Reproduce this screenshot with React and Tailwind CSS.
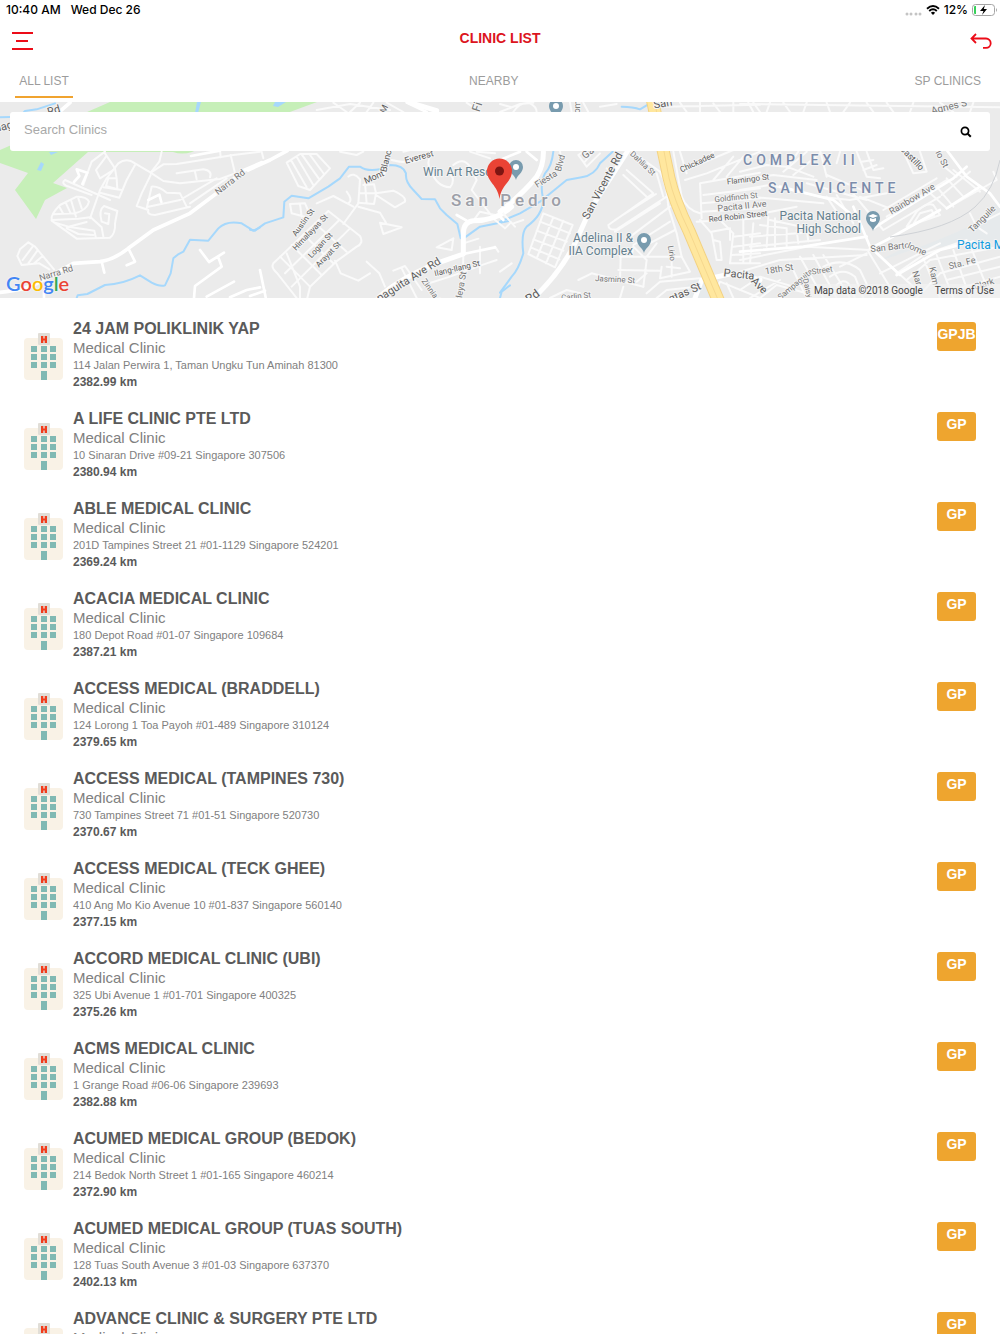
import React from "react";

const clinics = [
  ["24 JAM POLIKLINIK YAP", "114 Jalan Perwira 1, Taman Ungku Tun Aminah 81300", "2382.99 km", "GPJB"],
  ["A LIFE CLINIC PTE LTD", "10 Sinaran Drive #09-21 Singapore 307506", "2380.94 km", "GP"],
  ["ABLE MEDICAL CLINIC", "201D Tampines Street 21 #01-1129 Singapore 524201", "2369.24 km", "GP"],
  ["ACACIA MEDICAL CLINIC", "180 Depot Road #01-07 Singapore 109684", "2387.21 km", "GP"],
  ["ACCESS MEDICAL (BRADDELL)", "124 Lorong 1 Toa Payoh #01-489 Singapore 310124", "2379.65 km", "GP"],
  ["ACCESS MEDICAL (TAMPINES 730)", "730 Tampines Street 71 #01-51 Singapore 520730", "2370.67 km", "GP"],
  ["ACCESS MEDICAL (TECK GHEE)", "410 Ang Mo Kio Avenue 10 #01-837 Singapore 560140", "2377.15 km", "GP"],
  ["ACCORD MEDICAL CLINIC (UBI)", "325 Ubi Avenue 1 #01-701 Singapore 400325", "2375.26 km", "GP"],
  ["ACMS MEDICAL CLINIC", "1 Grange Road #06-06 Singapore 239693", "2382.88 km", "GP"],
  ["ACUMED MEDICAL GROUP (BEDOK)", "214 Bedok North Street 1 #01-165 Singapore 460214", "2372.90 km", "GP"],
  ["ACUMED MEDICAL GROUP (TUAS SOUTH)", "128 Tuas South Avenue 3 #01-03 Singapore 637370", "2402.13 km", "GP"],
  ["ADVANCE CLINIC & SURGERY PTE LTD", "", "", "GP"],
];

// Each tile is drawn in units of a third of a pixel, starting at its own x.
const tiles = [
  {
    x: 0,
    water: [
      "M0,52 L60,50 L75,33 L110,28 L165,10",
      "M230,594 L233,586 L262,582 L315,555 Q370,552 420,526 L455,548 Q480,561 495,556 L512,520 L520,475 L533,464 L550,455 L570,419 L625,422 L655,385 Q680,360 725,370 L760,392 L780,382",
    ],
    minor: [
      "M315,155 L275,185 L262,220 L250,255 M315,160 L345,205 L350,235 L325,235 L318,258 L352,268 L350,235",
      "M340,210 L300,235 L288,210 L318,170",
      "M330,300 L195,240 Q183,248 198,257 L275,285",
      "M270,355 L300,270 L320,235 L355,190 Q380,172 405,190 L452,218 L478,185 L485,155",
      "M405,195 L380,240 L358,293 L300,278 M310,262 L365,270",
      "M452,218 L490,193 L530,192 L700,165 L780,155",
      "M452,218 L490,243 L540,250 L660,237 L705,220 M530,220 L610,208 Q638,212 630,232 M585,215 L590,238 M705,220 L692,165 M660,150 L662,172",
      "M452,225 L425,280 L410,318 L445,330 Q440,345 465,345 L570,320 M455,260 L440,325 M455,260 Q475,258 500,278 L540,280 L560,320 M445,320 L540,300 L650,235 M570,310 L680,235",
      "M270,352 L235,356 L155,360 Q150,345 180,315 L230,290 Q262,290 267,305 Q262,330 225,340 L162,343 M178,320 L190,342 M197,308 L212,340 M213,300 L228,350 M235,295 L245,325",
      "M155,362 L230,416 L330,413 Q347,400 345,370 L352,333 L312,318 Q295,330 305,365 L325,372 L328,342 L315,340 M272,352 L305,382 L310,410 M165,368 L205,380 L283,392 L287,410 M200,385 L235,402 L280,405 M200,382 L260,366",
      "M60,448 L85,427 L105,440 L162,508 M60,448 L52,468 L65,495 L118,490 L148,508 M68,480 L98,440 M85,490 L112,452 M100,492 L128,468",
    ],
    major: [
      "M230,208 L262,218 L247,252 M230,208 L238,228 L222,246 M445,300 L478,284 L484,306",
      "M305,485 L313,518 M385,445 L405,485 L380,496 M600,450 L627,486 L672,458 M655,472 L665,500 L585,558 L582,594 M620,590 L702,545 M690,592 L740,570 L780,562 M132,575 L132,594 M573,168 L660,152",
    ],
    wide: ["M0,577 Q80,570 120,545 L220,490 L300,485 Q340,480 385,445 L460,390 L570,340 L650,280 L730,212 L785,188", "M150,60 L210,8"],
  },
  {
    x: 250,
    water: [
      "M0,389 L15,392 L45,370 L100,352 L103,305 L125,287 L175,295 L235,260 L270,235 L297,200 L330,200 Q350,215 390,208 L420,195 Q460,195 468,220 Q465,245 490,270 L515,297 L555,298 L570,325 L590,345 L622,372 L632,415",
      "M645,412 L690,380 L780,362 M750,594 L755,575 L780,556",
    ],
    minor: [
      "M35,155 L40,175 M110,188 L150,162 L200,162 L240,205 L180,270 L145,258 Z M123,180 L170,262 M140,170 L190,255 M155,163 L208,238 M178,162 L222,222",
      "M120,312 L165,310 L180,345 M120,312 L125,340 L170,352 M150,312 L155,350",
      "M295,230 Q310,215 330,238 L325,310 L280,372 M200,310 L250,288 L310,320 M290,275 Q310,300 295,310",
      "M340,255 L372,253 L378,280 L372,312 L325,308 M330,280 L378,280 L430,272 Q470,290 465,305 L435,322 L378,285 M325,320 L390,338 L408,368 M390,368 L455,382 L400,402 Z M345,250 L350,310",
      "M235,333 L330,408 Q342,430 320,440 L258,485 L180,560 L172,594 M235,333 L70,490 Q62,503 80,518 L140,594 M268,360 L105,520 M300,385 L125,560",
      "M90,470 L180,560 M125,435 L215,525 M160,403 L250,490 M195,370 L290,455 M110,460 L150,560 L150,594",
      "M255,482 L272,520 L325,542 L360,520 M350,485 L388,520 L405,560",
      "M425,180 Q480,195 520,175 M460,155 L480,150 M545,160 Q525,190 545,215 Q560,260 600,262 Q618,240 600,222",
      "M610,195 Q640,170 660,200 L680,240 L665,270 L735,360 L765,385 L780,370 M735,345 L690,335 L675,355",
      "M560,442 L610,415 L605,450 Z M640,430 L685,416 M430,512 L465,498 L515,570 M455,505 L500,594 M530,552 L600,530 L710,490 L740,480 M690,440 L690,520 M640,465 Q640,540 625,594 M735,440 L745,455",
      "M270,155 L320,165 L340,155 M660,155 L720,175 M680,155 L735,160",
      "M200,30 L300,12 L420,30 M250,8 L290,36 M330,8 L300,36 M370,8 L350,36 M410,8 L460,36 M650,8 L690,36",
    ],
    major: ["M30,510 L47,592 M0,588 L45,572 M420,155 L400,228 M620,345 L650,362 M470,8 L530,36 M640,462 L735,442"],
    wide: ["M-6,210 L60,180 L112,152"],
    trunk: ["M385,594 Q440,540 560,490 L640,462 L640,400 Q640,365 670,362 Q740,362 785,320", "M480,8 L560,32"],
  },
  {
    x: 500,
    water: [
      "M160,155 Q155,200 135,220 Q120,250 128,290 Q135,340 80,380 Q62,400 70,460 Q55,510 35,530 L0,578",
      "M0,365 L60,340 L120,305 L200,240 L245,232 Q285,225 300,190 L338,155",
      "M365,20 Q400,20 420,28 L450,10",
    ],
    minor: [
      "M130,340 L218,375 L165,502 L85,462 Z M120,365 L210,400 M110,392 L200,425 M100,418 L190,452 M92,442 L178,478 M160,352 L110,475 M190,362 L138,490",
      "M0,330 L45,380 M40,370 L70,360 M180,155 L185,185 M235,165 L260,200 L300,160 M235,165 L250,155 M280,155 L255,185 M320,205 L340,225",
      "M325,375 Q325,392 350,388 L500,290 M325,375 L460,280 L380,210 M345,360 L468,282 M370,225 L440,290 M345,395 L480,310 M380,418 L510,320 M400,435 L510,365 M430,440 L525,390",
      "M395,155 L480,215 Q500,250 505,320 L530,400 L545,470 M470,220 L490,290",
      "M360,470 L540,470 M355,510 L480,512 M362,470 L360,540 M395,470 L400,440 L440,480 L430,560 M440,470 L470,430 M485,500 L480,535 L570,515 L545,470 M500,500 L540,505 M515,470 L515,530",
      "M235,540 L275,520 L430,560 M410,545 L440,520 M360,594 L370,560 M0,515 L35,490 M150,594 L200,570 L240,580 M470,594 L500,570 L590,560 M440,580 L480,545 L600,535",
      "M520,155 L545,290 Q560,330 600,340 M540,155 L560,220 M545,215 L700,150 M555,240 L620,220 L780,155 M600,250 L780,218 M600,250 L605,355 M610,285 L780,265 M605,310 L780,295 M605,335 L780,325 M590,365 L780,355 M620,180 L640,155 M640,240 L700,170 M680,230 L730,170",
      "M600,360 L635,400 L650,480 L665,480 L660,425 L640,420 M635,395 L690,385 L690,420 M660,360 L700,400 L690,490 L780,490 M700,410 L780,400 M700,440 L780,430 M695,465 L780,460 M730,360 L730,490 M760,370 L750,490",
      "M640,594 L660,545 L780,594 M680,550 L700,594",
      "M0,36 L60,12 L100,8 M40,36 Q60,5 90,10 Q110,20 110,36 M0,12 L35,22 M210,8 L215,36 M250,8 L265,36 M300,20 L350,12 M490,20 L780,14 M540,8 L560,36 M600,8 L600,36 M640,10 L660,36 M700,8 L700,36 M745,8 L760,36",
    ],
    major: ["M80,155 L110,180 M0,180 L60,155 M0,350 L10,360"],
    trunk: ["M0,335 Q70,280 110,230 Q132,195 130,150", "M385,150 L270,330 L225,430 Q180,520 95,600", "M585,594 L605,540 L700,520 L780,540"],
  },
  {
    x: 740,
    water: [],
    minor: [
      "M0,215 L80,195 L140,200 L220,230 M0,240 L100,225 L230,240 M0,270 L90,255 L240,290 M30,290 L250,310 M90,180 L120,160 M150,190 L175,155 M130,215 L200,155 M160,225 L240,160",
      "M70,340 L170,320 M90,360 L230,390 M60,375 L140,385 L140,440 M85,350 L80,440 M105,355 L105,440 M30,410 L240,395 M30,440 L240,420 M170,390 L175,430 M200,385 L205,425",
      "M240,150 L260,230 M300,155 L290,190 M350,155 L380,230 L420,235 M380,155 L400,210 L430,205 M365,185 L400,180 M370,210 L410,195 M260,225 L390,280 M200,250 L380,300",
      "M240,290 L330,300 L440,280 M260,290 L300,350 M290,285 L340,370 M330,270 L430,390 M360,290 L460,330 M430,390 L600,290 M440,350 L620,240 M430,330 L590,235",
      "M500,380 L530,335 Q560,305 580,315 L600,345 Z M520,372 L540,340 L575,330 L582,345 Z",
      "M490,155 L520,220 L560,215 L540,155 M510,160 L535,205",
      "M590,260 L640,320 M620,235 L670,290 M605,285 L690,215 M620,325 L770,240 L760,215 M640,210 L720,275 M560,270 L620,325 M600,190 L650,230",
      "M0,480 L200,440 L390,450 M0,515 L120,480 L380,465 M150,490 L200,594 M180,470 L250,594 M220,465 L290,594 M250,465 L330,594 M0,570 L60,530 L160,560 M30,594 L120,540",
      "M250,500 Q310,470 360,510 L400,594 M270,530 Q310,500 345,530 L370,594 M290,555 Q310,535 325,550 L345,594 M300,500 L380,460",
      "M385,455 L470,594 M410,460 L520,560 M470,520 L550,465 L680,420 M420,520 L600,430 M500,540 L570,480 L780,440 M530,594 L600,520 L780,470 M550,475 L600,594 M590,465 L640,594 M640,450 L690,594 M690,435 L740,560 M620,540 L780,500 M640,570 L780,530",
      "M690,340 L710,380 L740,400 M720,370 L780,340 M60,594 L110,555 L200,580",
      "M0,12 L780,22 M40,8 L60,36 M90,8 L80,36 M130,8 L150,36 M200,8 L190,36 M260,8 L270,36 M330,8 L310,36 M380,8 L400,36 M440,8 L460,36 M520,8 L510,36 M600,8 L640,36 M700,8 L690,36",
    ],
    major: [
      "M620,150 L680,230 L750,280 L780,320 M340,320 L390,440 L480,525 M390,445 L440,420 L600,330 M120,260 L280,300 L330,340",
      "M400,385 L470,340 L640,235 L680,200",
      "M620,325 L720,260",
      "M0,455 L190,440 L380,410 M470,525 L600,450 L700,425",
    ],
    wide: [],
  },
];

const street = "fill-[#777777]";
const dark = "fill-[#5b5b5b]";
const place = "fill-[#64808e]";

// text, centre x, centre y, rotation, size, colour
const labels = [
  ["Narra Rd", 230, 182, -38, 9, street],
  ["Narra Rd", 56, 273, -17, 9, street],
  ["nag", 4, 127, -14, 11, dark],
  ["Rd", 54, 111, -16, 11, dark],
  ["Mont", 374, 177, -24, 9, dark],
  ["Blanc", 386, 161, -76, 9, dark],
  ["Everest", 419, 157, -15, 9, dark],
  ["M", 384, 109, -65, 9, dark],
  ["Austin St", 303, 222, -54, 8, dark],
  ["Himalayas St", 310, 232, -46, 8, dark],
  ["Logan St", 320, 245, -47, 8, dark],
  ["Arayat St", 328, 254, -46, 8, dark],
  ["paguita Ave Rd", 409, 280, -32, 11, dark],
  ["Ilang-Ilang St", 457, 268, -13, 8, dark],
  ["Zinnia S", 432, 291, 55, 8, street],
  ["tleya St", 461, 286, -80, 9, street],
  ["Fi", 478, 107, -72, 12, street],
  ["om", 577, 107, -88, 9, street],
  ["Fiesta", 546, 179, -32, 9, street],
  ["Blvd", 560, 163, -75, 9, street],
  ["San Vicente Rd", 603, 186, -62, 11, dark],
  ["Ga", 588, 153, -38, 10, street],
  ["Dahlia St", 643, 163, 43, 8, street],
  ["Lirio", 672, 253, 80, 8, street],
  ["Jasmine St", 615, 279, 3, 8, street],
  ["Carlin St", 576, 296, -6, 8, street],
  ["Rd", 533, 297, -35, 12, dark],
  ["gtas St", 685, 293, -24, 11, dark],
  ["San", 663, 104, -10, 11, dark],
  ["Chickadee", 697, 162, -25, 8, dark],
  ["Flamingo St", 748, 179, -7, 8, dark],
  ["Goldfinch St", 736, 197, -6, 8, street],
  ["Pacita II Ave", 742, 206, -6, 9, street],
  ["Red Robin Street", 738, 216, -6, 8, dark],
  ["Pacita", 739, 275, 6, 11, dark],
  ["Ave", 759, 286, 45, 11, dark],
  ["18th St", 779, 269, -9, 9, street],
  ["Sampaguita", 795, 284, -40, 8, street],
  ["Street", 822, 270, -8, 8, street],
  ["Daisy", 808, 288, 75, 8, street],
  ["Castillo", 912, 158, 46, 9, dark],
  ["lo St", 942, 159, 62, 9, street],
  ["Agnes S", 949, 107, -14, 10, street],
  ["Rainbow Ave", 912, 199, -31, 9, street],
  ["San Barto", 890, 247, -6, 9, street],
  ["lome", 917, 249, 24, 9, street],
  ["Tanguile", 982, 219, -45, 9, street],
  ["Sta. Fe", 962, 263, -14, 9, street],
  ["Nar", 917, 278, 72, 9, street],
  ["Kam", 934, 276, 78, 9, street],
  ["Clark", 984, 284, -18, 9, street],
];

function PoiPin({ x, y, children }) {
  return (
    <g transform={`translate(${x} ${y})`}>
      <path d="M0 12 C-1 7 -7 5 -7 -1 A7 7 0 1 1 7 -1 C7 5 1 7 0 12Z" fill="#789bae" />
      {children || <circle cy="-1" r="3" fill="#fff" />}
    </g>
  );
}

function MapArt() {
  return (
    <svg viewBox="0 102 1000 196" preserveAspectRatio="xMidYMid slice" className="block h-full w-full bg-[#ebebeb] font-['Roboto',sans-serif]" role="img" aria-label="Map of San Pedro">
      <path d="M110 102 L0 150 L0 163 L28 173 L15 190 L36 219 L45 200 L67 188 L53 183 L88 152 L173 152 Q182 155 192 152 L233 133 L317 102Z" fill="#c6efb8" />
      <g fill="#a6d8fc">
        <path d="M37 170 L41 162 L44 164 L41 171Z M49 152 L58 152 L51 155Z M197 102 H201 L198 113 H195Z M275 102 H286 L278 107 L273 106Z" />
      </g>
      <path d="M876 262 Q930 245 970 226 L1000 200 L1000 240 L950 246 L900 250Z M670 298 L700 276 L720 298Z" fill="#e6eaec" />
      {tiles.map((t) => (
        <g key={t.x} transform={`translate(${t.x} 100) scale(${1 / 3})`} fill="none" strokeLinecap="round" strokeLinejoin="round">
          {t.water.map((d) => <path key={d} d={d} stroke="#a6d8fc" strokeWidth="6" />)}
          {t.minor.map((d) => <path key={d} d={d} stroke="#fafafa" strokeWidth="6" />)}
          {t.major.map((d) => <path key={d} d={d} stroke="#fff" strokeWidth="8" />)}
          {(t.wide || []).map((d) => <path key={d} d={d} stroke="#fff" strokeWidth="11" />)}
          {(t.trunk || []).map((d) => <path key={d} d={d} stroke="#fff" strokeWidth="15" />)}
        </g>
      ))}
      <g fill="none">
        <path d="M890 237 Q950 229 975 207 Q994 190 1000 160" stroke="#cfd2d6" strokeWidth="1" />
        <path d="M652 98 L669 178 Q674 200 689 231 L719 302" stroke="#f3d283" strokeWidth="13" />
        <path d="M652 98 L669 178 Q674 200 689 231 L719 302" stroke="#ffe79e" strokeWidth="11" />
        <path d="M654 98 L669 178 Q674 200 689 231 L719 302" stroke="#f6d88e" strokeWidth="1" />
      </g>
      <g textAnchor="middle" stroke="#f4f4f4" strokeWidth="2" strokeLinejoin="round" style={{ paintOrder: "stroke" }}>
        {labels.map(([text, x, y, r, size, color]) => (
          <text key={text + x} transform={`translate(${x} ${y}) rotate(${r})`} y="3" fontSize={size} className={color}>{text}</text>
        ))}
        <g fontSize="12" className={place}>
          <text x="423" y="176" textAnchor="start">Win Art Reso</text>
          <text x="633" y="242" textAnchor="end">Adelina II &amp;</text>
          <text x="633" y="255" textAnchor="end">IIA Complex</text>
          <text x="861" y="220" textAnchor="end">Pacita National</text>
          <text x="861" y="233" textAnchor="end">High School</text>
        </g>
        <text x="957" y="249" textAnchor="start" fontSize="12" className="fill-[#129be0]">Pacita M</text>
        <text x="451" y="206" textAnchor="start" fontSize="17" className="fill-[#9c9fa8] font-medium tracking-[4px]">San Pedro</text>
        <g fontSize="14" textAnchor="start" className="fill-[#7b8cab] font-medium tracking-[4px]">
          <text x="743" y="165">COMPLEX II</text>
          <text x="768" y="193">SAN VICENTE</text>
        </g>
      </g>
      <PoiPin x={516} y={168} />
      <PoiPin x={556} y={107} />
      <PoiPin x={644} y={241} />
      <PoiPin x={873} y={219}>
        <path d="M-5 -3 L0 -5 L5 -3 L0 -1Z M-3 -1 L0 0 L3 -1 V2 Q0 4 -3 2Z" fill="#fff" />
      </PoiPin>
      <path d="M499.500 199 C498 185 487 182 487 171 A12.500 12.500 0 0 1 512 171 C512 182 501 185 499.500 199Z" fill="#ea4335" />
      <circle cx="499.500" cy="171" r="4.500" fill="#7d1512" />
    </svg>
  );
}

function ClinicIcon() {
  return (
    <svg viewBox="0 0 39 48" className="mt-[14px] h-12 w-[39px] shrink-0" aria-hidden="true">
      <rect y="5" width="39" height="42" rx="4" fill="#f9f2e6" />
      <rect x="14" width="12" height="12" rx="1" fill="#e1ded7" />
      <path d="M17 3 H19.300 V5.400 H20.700 V3 H23 V10 H20.700 V7.400 H19.300 V10 H17Z" fill="#f23c1c" />
      <g fill="#80b9b3">
        {[13, 21, 29].map((y) => [7, 17, 26].map((x) => <rect key={x + "-" + y} x={x} y={y} width="6" height="6" />))}
        <rect x="17" y="38" width="6" height="9" />
      </g>
    </svg>
  );
}

function StatusBar() {
  return (
    <div className="flex h-5 shrink-0 items-center justify-between pr-[6px] pl-[6px] font-['Inter',sans-serif] text-xs font-medium text-black">
      <div className="flex gap-[10px]">
        <span>10:40 AM</span>
        <span>Wed Dec 26</span>
      </div>
      <div className="flex items-center gap-1">
        <svg viewBox="0 0 17 4" className="mt-[7px] h-1 w-[17px]" fill="#c4c4c4" aria-hidden="true">
          <circle cx="2" cy="2" r="1.500" /><circle cx="6" cy="2" r="1.500" /><circle cx="11" cy="2" r="1.500" /><circle cx="15" cy="2" r="1.500" />
        </svg>
        <svg viewBox="0 0 14 10" className="h-[10px] w-[14px]" aria-label="Wi-Fi">
          <path d="M1 3.800 Q7 -1.600 13 3.800 M3.200 6 Q7 2.600 10.800 6" fill="none" stroke="#000" strokeWidth="1.900" />
          <path d="M4.900 7.700 Q7 6 9.100 7.700 L7 9.900Z" />
        </svg>
        <span>12%</span>
        <svg viewBox="0 0 26 12" className="-mr-1 h-3 w-[26px]" aria-label="Battery charging">
          <rect x=".5" y=".5" width="22" height="11" rx="3" fill="none" stroke="#a5a5a5" />
          <path d="M24 4 Q26 6 24 8Z" fill="#a5a5a5" />
          <path d="M4 2 H3 Q2 2 2 3 V9 Q2 10 3 10 H4Z" fill="#35d058" />
          <path d="M13 1 L8 7 H11.500 L10 11 L15 5 H11.800Z" />
        </svg>
      </div>
    </div>
  );
}

export default function App() {
  return (
    <div className="flex h-screen flex-col overflow-hidden bg-white font-['Liberation_Sans',Arial,sans-serif]">
      <StatusBar />
      <header className="grid h-[42px] shrink-0 grid-cols-[1fr_auto_1fr] items-center px-2">
        <button type="button" aria-label="Menu" className="justify-self-start px-1">
          <svg viewBox="0 0 21 18" className="h-[18px] w-[21px]" aria-hidden="true">
            <path d="M0 1 H21 M4 9 H16 M0 17 H21" stroke="#ec0c18" strokeWidth="2" />
          </svg>
        </button>
        <h1 className="pb-[7px] text-sm leading-5 font-bold text-[#dc1420]">CLINIC LIST</h1>
        <button type="button" aria-label="Back" className="justify-self-end">
          <svg viewBox="0 0 22 16" className="h-4 w-[22px]" fill="none" stroke="#ec0c18" strokeWidth="1.800" aria-hidden="true">
            <path d="M6 1 L1.500 5.500 L6 10 M1.500 5.500 H16 A4.700 4.700 0 0 1 16 14.900 H13" />
          </svg>
        </button>
      </header>
      <nav className="flex h-10 shrink-0 items-start justify-between px-[15px] text-xs text-[#9c9c9c]">
        <a href="#all" className="flex h-9 w-[58px] items-center justify-center border-b-2 border-[#f0a32f] pt-[4px]">ALL LIST</a>
        <a href="#nearby" className="flex h-9 items-center pt-[2px]">NEARBY</a>
        <a href="#sp" className="flex h-9 items-center pr-1 pt-[2px]">SP CLINICS</a>
      </nav>
      <section className="relative h-[196px] shrink-0">
        <MapArt />
        <form className="absolute inset-x-[10px] top-[10px] flex h-[39px] items-center rounded-[3px] bg-white pr-[18px] pl-[14px]">
          <input aria-label="Search Clinics" placeholder="Search Clinics" className="min-w-0 flex-1 pb-1 text-[13px] outline-none placeholder:text-[#a9a9a9]" />
          <button type="button" aria-label="Search">
            <svg viewBox="0 0 12 12" className="h-3 w-3" fill="none" stroke="#000" aria-hidden="true">
              <circle cx="5" cy="5" r="3.600" strokeWidth="1.700" />
              <path d="M7.700 7.700 L10.800 10.800" strokeWidth="2" />
            </svg>
          </button>
        </form>
        <div className="absolute bottom-[2px] left-[6px] font-['Lato',sans-serif] text-[20px] leading-[26px] font-semibold [text-shadow:0_0_2px_white]" aria-label="Google">
          <span className="text-[#4285f4]">G</span><span className="text-[#ea4335]">o</span><span className="text-[#fbbc05]">o</span><span className="text-[#4285f4]">g</span><span className="text-[#34a853]">l</span><span className="text-[#ea4335]">e</span>
        </div>
        <div className="absolute right-0 bottom-0 flex gap-3 bg-[#f2f2f2]/70 pr-[6px] pl-1 font-['Roboto',sans-serif] text-[10px] leading-[14px] text-[#444444]">
          <span>Map data ©2018 Google</span>
          <a href="#terms">Terms of Use</a>
        </div>
      </section>
      <ul className="flex min-h-0 flex-1 flex-col gap-[18px] overflow-y-auto pt-[21px] [scrollbar-width:none]">
        {clinics.map(([name, address, distance, type]) => (
          <li key={name} className="flex h-[72px] shrink-0 items-start px-6">
            <ClinicIcon />
            <div className="ml-[10px] min-w-0 flex-1">
              <h2 className="text-base leading-5 font-bold text-[#5a5a5a]">{name}</h2>
              <p className="text-[15px] leading-[18px] text-[#808080]">Medical Clinic</p>
              <p className="text-[11px] leading-4 text-[#808080]">{address}</p>
              <p className="text-xs leading-[18px] font-bold text-[#5a5a5a]">{distance}</p>
            </div>
            <span className="mt-[3px] flex h-[29px] w-[39px] justify-center rounded-[3px] bg-[#eea52f] text-sm leading-6 font-bold text-white">{type}</span>
          </li>
        ))}
      </ul>
    </div>
  );
}
